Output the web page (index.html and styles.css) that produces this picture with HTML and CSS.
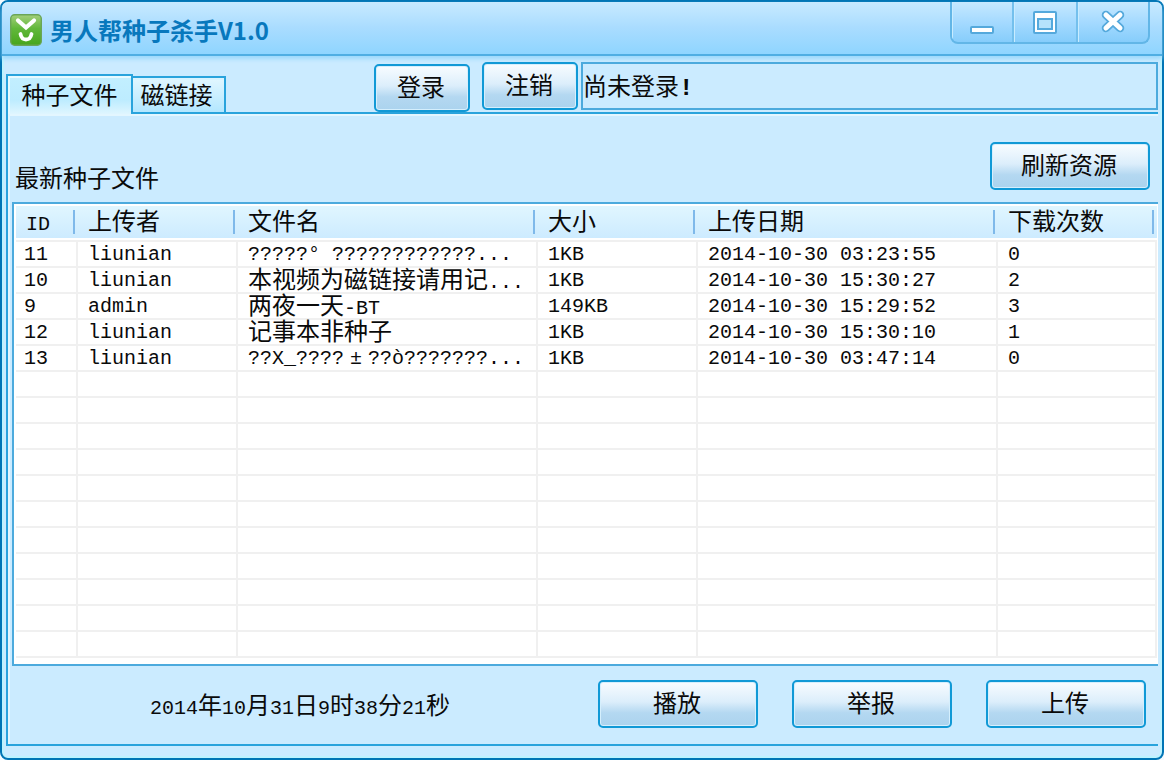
FILE: index.html
```html
<!DOCTYPE html>
<html lang="zh-CN">
<head>
<meta charset="utf-8">
<title>男人帮种子杀手V1.0</title>
<link rel="stylesheet" href="styles.css">
</head>
<body>
<div class="window">
  <header class="titlebar">
    <svg class="logo" viewBox="0 0 32 32" aria-hidden="true">
      <defs>
        <linearGradient id="leaf" x1="0" y1="0" x2="0" y2="1">
          <stop offset="0" stop-color="#a3cf7b"/>
          <stop offset="0.45" stop-color="#62b83b"/>
          <stop offset="1" stop-color="#46a51c"/>
        </linearGradient>
      </defs>
      <rect x="0.7" y="0.7" width="30.6" height="30.6" rx="4" fill="url(#leaf)" stroke="#6aa557" stroke-width="1.4"/>
      <path d="M8 6.500 L16 13.500 L24 6.500" fill="none" stroke="#fff" stroke-width="4.200" stroke-linejoin="miter" stroke-linecap="round"/>
      <path d="M10.500 20 Q11.500 25.500 16 25.500 Q20.500 25.500 21.500 20" fill="none" stroke="#fff" stroke-width="3.800" stroke-linecap="round"/>
    </svg>
    <h1 class="title">男人帮种子杀手V1.0</h1>
    <div class="controls">
      <button class="control minimize" type="button" aria-label="最小化">
        <svg viewBox="0 0 26 26"><rect x="2" y="18" width="22" height="6" rx="1" fill="#fff" stroke="#55a9dc" stroke-width="2"/></svg>
      </button>
      <button class="control" type="button" aria-label="最大化">
        <svg viewBox="0 0 26 26"><rect x="2" y="3" width="22" height="21" rx="1" fill="#fff" stroke="#55a9dc" stroke-width="2"/><rect x="6" y="10" width="14" height="10" fill="#b5e2fc" stroke="#55a9dc" stroke-width="2"/></svg>
      </button>
      <button class="control close" type="button" aria-label="关闭">
        <svg viewBox="0 0 26 26"><path d="M6 6 L20 19 M20 6 L6 19" stroke="#55a9dc" stroke-width="8.500" stroke-linecap="round"/><path d="M6 6 L20 19 M20 6 L6 19" stroke="#fff" stroke-width="5" stroke-linecap="round"/></svg>
      </button>
    </div>
  </header>

  <div class="toolbar">
    <div class="tabs" role="tablist">
      <button class="tab active" type="button" role="tab" aria-selected="true">种子文件</button>
      <button class="tab" type="button" role="tab" aria-selected="false">磁链接</button>
    </div>
    <div class="account">
      <button class="button small low" type="button">登录</button>
      <button class="button small" type="button">注销</button>
    </div>
    <div class="status" role="status">尚未登录<b>!</b></div>
  </div>

  <main class="panel">
    <div class="heading">
      <h2 class="caption">最新种子文件</h2>
      <button class="button" type="button">刷新资源</button>
    </div>
    <div class="list">
      <table class="files">
        <colgroup><col class="c-id"><col class="c-user"><col class="c-name"><col class="c-size"><col class="c-date"><col></colgroup>
        <thead>
          <tr><th><span class="latin">ID</span></th><th>上传者</th><th>文件名</th><th>大小</th><th>上传日期</th><th>下载次数</th></tr>
        </thead>
        <tbody>
          <tr><td>11</td><td>liunian</td><td>?????° ????????????...</td><td>1KB</td><td>2014-10-30 03:23:55</td><td>0</td></tr>
          <tr><td>10</td><td>liunian</td><td class="cjk">本视频为磁链接请用记<span class="latin">...</span></td><td>1KB</td><td>2014-10-30 15:30:27</td><td>2</td></tr>
          <tr><td>9</td><td>admin</td><td class="cjk">两夜一天<span class="latin">-BT</span></td><td>149KB</td><td>2014-10-30 15:29:52</td><td>3</td></tr>
          <tr><td>12</td><td>liunian</td><td class="cjk">记事本非种子</td><td>1KB</td><td>2014-10-30 15:30:10</td><td>1</td></tr>
          <tr><td>13</td><td>liunian</td><td>??X_????<span class="wide">±</span>??ò???????...</td><td>1KB</td><td>2014-10-30 03:47:14</td><td>0</td></tr>
          <tr><td></td><td></td><td></td><td></td><td></td><td></td></tr>
          <tr><td></td><td></td><td></td><td></td><td></td><td></td></tr>
          <tr><td></td><td></td><td></td><td></td><td></td><td></td></tr>
          <tr><td></td><td></td><td></td><td></td><td></td><td></td></tr>
          <tr><td></td><td></td><td></td><td></td><td></td><td></td></tr>
          <tr><td></td><td></td><td></td><td></td><td></td><td></td></tr>
          <tr><td></td><td></td><td></td><td></td><td></td><td></td></tr>
          <tr><td></td><td></td><td></td><td></td><td></td><td></td></tr>
          <tr><td></td><td></td><td></td><td></td><td></td><td></td></tr>
          <tr><td></td><td></td><td></td><td></td><td></td><td></td></tr>
          <tr><td></td><td></td><td></td><td></td><td></td><td></td></tr>
        </tbody>
      </table>
    </div>
    <footer class="footer">
      <time class="clock" datetime="2014-10-31T09:38:21"><span class="latin">2014</span>年<span class="latin">10</span>月<span class="latin">31</span>日<span class="latin">9</span>时<span class="latin">38</span>分<span class="latin">21</span>秒</time>
      <div class="actions">
        <button class="button" type="button">播放</button>
        <button class="button" type="button">举报</button>
        <button class="button" type="button">上传</button>
      </div>
    </footer>
  </main>
</div>
</body>
</html>
```

FILE: styles.css
```css
* { box-sizing: border-box; }

body {
  margin: 0;
  background: #f4fbff;
  color: #0a0a0a;
  font: 24px/24px "Liberation Mono", "Noto Sans CJK SC", monospace;
}

button {
  margin: 0;
  padding: 0;
  color: inherit;
  font: inherit;
}

.window {
  display: flex;
  flex-direction: column;
  min-height: 100vh;
  padding-bottom: 12px;
  border: 2px solid #0075b5;
  border-radius: 8px;
  background: #cbebff;
  box-shadow: inset 0 0 0 2px #bdf3ff;
}

.latin { font-size: 20px; line-height: 0; }

/* Title bar */
.titlebar {
  display: flex;
  align-items: center;
  height: 54px;
  padding: 0 12px 0 8px;
  border-bottom: 2px solid #4faee3;
  border-radius: 6px 6px 0 0;
  background: linear-gradient(#c8eaff, #a9dcff 50%, #8fd5ff);
  box-shadow: 0 3px 4px #9bd9fc;
}

.logo { width: 32px; height: 32px; margin-top: 4px; }

.title {
  flex: 1;
  margin: 4px 0 0 8px;
  color: #0878bd;
  font: bold 24px/32px "Noto Sans CJK SC", sans-serif;
}

.controls {
  display: flex;
  align-self: flex-start;
  height: 42px;
  border: 2px solid #62b6e7;
  border-top: 0;
  border-radius: 0 0 8px 8px;
  background: linear-gradient(#c6e9ff, #a5daff 50%, #86cdfb);
  overflow: hidden;
}

.control {
  width: 64px;
  border: 0;
  border-right: 2px solid #74c0ed;
  background: none;
  box-shadow: inset 1px 0 #c8ecff;
}

.control.minimize { width: 62px; }
.control.close { width: 70px; border-right: 0; }
.control svg { display: block; width: 26px; height: 26px; margin: 0 auto; }

/* Tabs and account bar */
.toolbar {
  display: flex;
  align-items: flex-end;
  height: 58px;
  margin: 0 4px;
  border-bottom: 2px solid #29a3dc;
}

.tabs { display: flex; align-items: flex-end; margin-right: 148px; }

.tab {
  width: 93px;
  height: 36px;
  padding: 6px 4px 0 0;
  border: 2px solid #29a3dc;
  border-left: 0;
  border-bottom: 0;
  background: linear-gradient(#e2f7ff, #b3e7ff);
  box-shadow: inset 0 2px #d9f4ff;
}

.tab.active {
  width: 127px;
  height: 42px;
  padding: 4px 0 0;
  margin-bottom: -4px;
  border-left: 2px solid #29a3dc;
  background: linear-gradient(#c2efff, #bdecff 60%, #e4f7ff);
  box-shadow: inset 0 2px #e6faff, inset 2px 0 #e6faff;
}

.account { display: flex; align-items: flex-end; gap: 12px; margin-right: 3px; }

.button {
  width: 160px;
  height: 48px;
  padding: 4px 2px 0 0;
  border: 2px solid #1199d6;
  border-radius: 5px;
  background: linear-gradient(#f8fcff, #dceefb 45%, #b4d8f1 70%, #abd3ee);
  box-shadow: inset 0 0 0 1px #d5effd;
}

.button.small { width: 96px; margin-bottom: 2px; }
.button.low { margin-bottom: 0; }

.status {
  flex: 1;
  height: 48px;
  margin-bottom: 2px;
  padding-top: 13px;
  border: 2px solid #4caadd;
}

/* Main panel */
.panel {
  display: flex;
  flex: 1;
  flex-direction: column;
  margin: 0 4px;
  border-left: 2px solid #29a3dc;
  border-bottom: 2px solid #29a3dc;
  box-shadow: inset 2px 2px #e3f6ff;
}

.heading {
  display: flex;
  align-items: flex-start;
  justify-content: space-between;
  padding: 28px 8px 12px 7px;
}

.caption { margin: 27px 0 -5px; font-size: 24px; font-weight: normal; line-height: 24px; }

.list {
  flex: 1;
  margin-left: 4px;
  padding: 2px 1px 4px 2px;
  border: 2px solid #4caadd;
  border-right: 0;
  background: #fff;
}

.files {
  width: 100%;
  table-layout: fixed;
  border-spacing: 0;
}

.c-id { width: 62px; }
.c-user, .c-size { width: 160px; }
.c-name, .c-date { width: 300px; }

.files th {
  height: 36px;
  padding: 2px 0 0 10px;
  border-bottom: 2px solid #f0f0f0;
  background:
    linear-gradient(#7fb9ea, #7fb9ea) right 3px top 4px / 2px 24px no-repeat,
    linear-gradient(#e0f6ff, #cdebff 32px, #fff 32px);
  font-weight: normal;
  text-align: left;
}

.files td {
  height: 26px;
  padding: 4px 0 0 10px;
  border-right: 2px solid #f0f0f0;
  border-bottom: 2px solid #f0f0f0;
  font-size: 20px;
  line-height: 18px;
  vertical-align: top;
  white-space: nowrap;
}

.files td:first-child { padding-left: 8px; }
.files td.cjk { padding-top: 5px; font-size: 24px; }

.wide { display: inline-block; width: 24px; text-align: center; }

/* Footer */
.footer {
  display: flex;
  align-items: center;
  justify-content: space-between;
  padding: 14px 12px 16px 142px;
}

.clock { padding-top: 8px; }

.actions { display: flex; gap: 34px; }
```
